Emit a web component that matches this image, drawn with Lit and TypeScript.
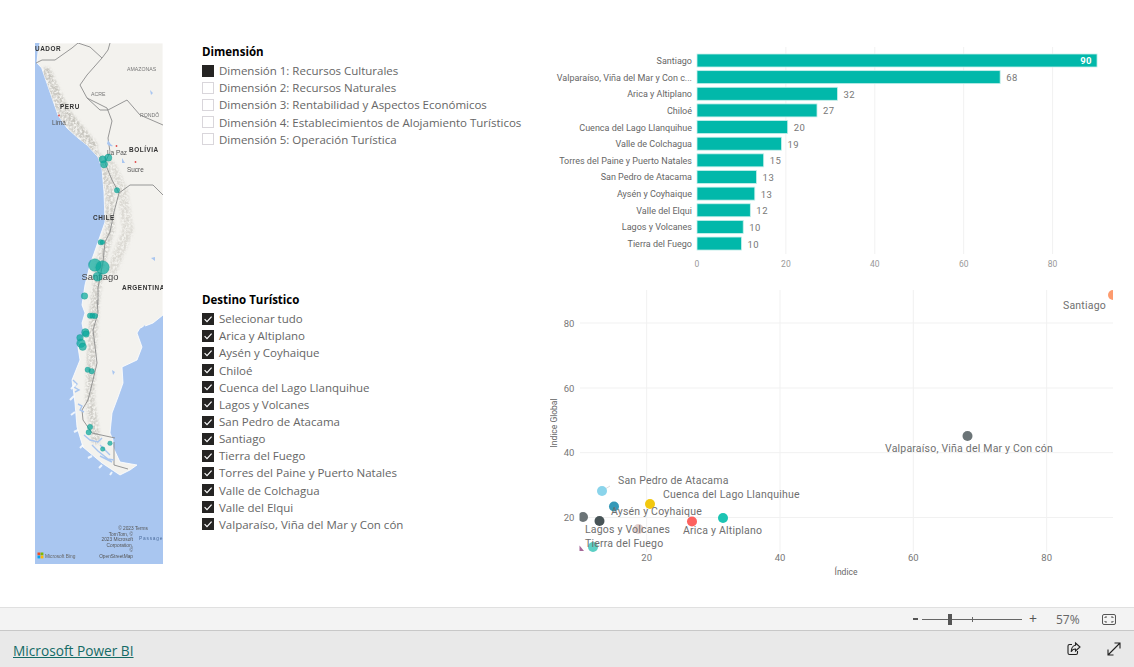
import { LitElement, html, svg, css } from 'lit';
import { customElement } from 'lit/decorators.js';

// label, shown value, value the bar is drawn from
const BARS: [string, number, number][] = [
  ['Santiago', 90, 90],
  ['Valparaíso, Viña del Mar y Con c...', 68, 68.2],
  ['Arica y Altiplano', 32, 31.6],
  ['Chiloé', 27, 27],
  ['Cuenca del Lago Llanquihue', 20, 20.4],
  ['Valle de Colchagua', 19, 19],
  ['Torres del Paine y Puerto Natales', 15, 15],
  ['San Pedro de Atacama', 13, 13.4],
  ['Aysén y Coyhaique', 13, 13],
  ['Valle del Elqui', 12, 12],
  ['Lagos y Volcanes', 10, 10.4],
  ['Tierra del Fuego', 10, 10],
];

const DIMENSIONS = [
  'Dimensión 1: Recursos Culturales',
  'Dimensión 2: Recursos Naturales',
  'Dimensión 3: Rentabilidad y Aspectos Económicos',
  'Dimensión 4: Establecimientos de Alojamiento Turísticos',
  'Dimensión 5: Operación Turística',
];

const DESTINOS = [
  'Selecionar tudo',
  'Arica y Altiplano',
  'Aysén y Coyhaique',
  'Chiloé',
  'Cuenca del Lago Llanquihue',
  'Lagos y Volcanes',
  'San Pedro de Atacama',
  'Santiago',
  'Tierra del Fuego',
  'Torres del Paine y Puerto Natales',
  'Valle de Colchagua',
  'Valle del Elqui',
  'Valparaíso, Viña del Mar y Con cón',
];

// x, y, color of each scatter point, in page pixels
const POINTS: [number, number, string][] = [
  [1113, 295, '#FD9B6E'],
  [967.5, 436, '#6B7477'],
  [602, 491, '#8AD4EB'],
  [614, 506.5, '#3599B8'],
  [650, 504, '#F2C80F'],
  [583, 517, '#6B7477'],
  [599.5, 521, '#475356'],
  [638.5, 529, '#E3CFCC'],
  [692, 521.5, '#FD625E'],
  [723, 518, '#1CC4B3'],
  [593, 547, '#5CCFC4'],
];

const SCATTER_LABELS: [string, number, number][] = [
  ['Santiago', 1063, 309],
  ['Valparaíso, Viña del Mar y Con cón', 885, 452],
  ['San Pedro de Atacama', 618, 484],
  ['Cuenca del Lago Llanquihue', 663, 498],
  ['Aysén y Coyhaique', 611, 515],
  ['Lagos y Volcanes', 585, 533],
  ['Arica y Altiplano', 683, 534],
  ['Tierra del Fuego', 585, 547],
];

const BUBBLES: [number, number, number][] = [
  [102.7, 159.3, 3.6], [108.3, 157.7, 3.6], [104, 164.3, 3.6], [117, 190.3, 2.7],
  [100.7, 242.3, 2.7], [102.5, 242.3, 2.3], [102.5, 267.5, 6.8], [94.8, 265, 6.3], [97.5, 276.7, 4.5],
  [84.5, 296, 3.3], [90, 315.7, 2.7], [92.5, 315.7, 2.7], [95, 316, 2.7],
  [85.3, 332.3, 3.7], [86, 334, 3.3], [80, 337.7, 3.3], [81, 343.3, 4.3], [82.7, 346.7, 3.7],
  [87.7, 369.7, 2.7], [91.7, 371.3, 2.7], [90, 427, 2.7], [88.7, 432.3, 2.7],
  [110, 443.3, 2.3], [102.7, 449, 2.3],
];

const MAP_LABELS: [string, number, number, string][] = [
  ['UADOR', 35, 50.5, 'ml-country'],
  ['AMAZONAS', 127, 71, 'ml-state'],
  ['ACRE', 91, 96, 'ml-state'],
  ['PERU', 60, 108.5, 'ml-country'],
  ['Lima', 52, 124.5, 'ml-city'],
  ['RONDÔ', 140, 117, 'ml-state'],
  ['La Paz', 107, 154.5, 'ml-city'],
  ['BOLÍVIA', 129, 152, 'ml-country'],
  ['Sucre', 127, 171.5, 'ml-city'],
  ['CHILE', 93, 220, 'ml-country'],
  ['Santiago', 100, 279.5, 'ml-big'],
  ['ARGENTINA', 122, 290, 'ml-country'],
];

const LAND =
  'M40 43 L38 52 L37 63 L41.7 68 L50 92 L58 115 L67 128 L78 138 L87 145 L98 157 L102 168 L104 192 L105 222 L98 242 L90 265 L85 285 L82 305 L85 313 L82 323 L84 334 L78 347 L80 360 L72 380 L75 403 L77 427 L83 447 L102 463 L120 475 L130 470 L137 465 L120 462 L113 447 L113 440 L110 433 L112 413 L118 397 L123 383 L122 367 L137 360 L142 347 L137 333 L140 328 L153 323 L163 315 L163 43 Z';

const BORDERS = [
  'M36 63 L42 60 L55 60 L72 48 L78 43',
  'M78 43 L90 47 L102 58 L108 50 L110 43',
  'M102 58 L87 75 L80 85 L87 98 L107 108 L112 121 L108 138 L110 152 L105 163 L112 180 L119 193 L130 185 L153 185 L163 195',
  'M87 98 L100 110 L108 110 L127 100 L140 115 L163 125',
  'M119 193 L114 212 L110 232 L105 242 L103 262 L98 288 L98 305',
  'M97 300 L98 313 L93 330 L97 363 L93 380 L88 400 L82 410 L83 420 L92 433 L115 438',
  'M114 442 L114 465 L128 469',
];

const FIORDS =
  'M73 380 l4 4 l-3 3 l5 3 l-4 2 M78 404 l4 2 l-2 4 l4 2 M84 435 l6 5 l8 2 l4 -4 M100 445 l10 10 M92 445 l6 6 l10 8 l6 1 M100 456 l12 6';

@customElement('app-root')
export class AppRoot extends LitElement {
  static override styles = css`
    :host {
      display: flex;
      flex-direction: column;
      width: 1134px;
      height: 667px;
      background: #fff;
      overflow: hidden;
      font-family: 'Open Sans', 'Noto Sans', sans-serif;
    }

    .canvas {
      display: flex;
      flex: 1;
      min-height: 0;
      padding: 43px 0 0 35px;
    }

    .map {
      flex: none;
      display: block;
      width: 128px;
      height: 521px;
    }

    .slicers {
      flex: none;
      width: 348px;
      margin-left: 39px;
    }

    .slicer {
      height: 248px;
    }

    .slicer-title {
      margin: 0 0 1px;
      font-size: 11.5px;
      line-height: 18px;
      font-weight: 700;
      color: #000;
    }

    .slicer-row {
      display: flex;
      align-items: center;
      gap: 5px;
      height: 17.17px;
      font-size: 11.5px;
      color: #666;
      white-space: nowrap;
    }

    .box {
      flex: none;
      box-sizing: border-box;
      display: flex;
      width: 12px;
      height: 12px;
      border: 1px solid #d9d6db;
    }

    .box.on {
      background: #252423;
      border-color: #252423;
    }

    .box svg {
      width: 10px;
      height: 10px;
    }

    .charts {
      flex: none;
      width: 584px;
    }

    .charts svg {
      display: block;
    }

    .status {
      flex: none;
      box-sizing: border-box;
      display: flex;
      align-items: center;
      height: 24px;
      background: #f3f3f3;
      border-top: 1px solid #e0e0e0;
      border-bottom: 1px solid #c8c8c8;
      color: #555;
    }

    .zoom-minus {
      margin-left: 913px;
      width: 5px;
      height: 2px;
      background: #555;
    }

    .track {
      position: relative;
      width: 100px;
      height: 1px;
      margin-left: 4px;
      background: #666;
    }

    .thumb {
      position: absolute;
      left: 26px;
      top: -5px;
      width: 3.5px;
      height: 11px;
      background: #555;
    }

    .tick {
      position: absolute;
      left: 50px;
      top: -2px;
      width: 1px;
      height: 5px;
      background: #666;
    }

    .zoom-plus {
      margin-left: 6px;
      font-size: 14px;
      line-height: 14px;
      width: 10px;
      text-align: center;
    }

    .zoom-value {
      margin-left: 18px;
      width: 28px;
      font-size: 12px;
      color: #666;
    }

    .fit {
      margin-left: 18px;
      display: block;
    }

    .footer {
      flex: none;
      display: flex;
      align-items: center;
      height: 36px;
      padding: 3px 12px 0 13px;
      box-sizing: border-box;
      background: #e9e9e9;
    }

    .brand {
      font-size: 13.7px;
      color: #146b66;
      text-decoration: underline;
    }

    .actions {
      display: flex;
      gap: 24px;
      margin-left: auto;
      margin-top: -3px;
    }

    .actions svg {
      display: block;
    }

    .grid-line {
      stroke: #f1f1f1;
      stroke-width: 1;
      fill: none;
    }

    .cat {
      font: 9px Roboto, sans-serif;
      fill: #666;
      text-anchor: end;
    }

    .val {
      font: 9.5px Roboto, sans-serif;
      letter-spacing: 0.5px;
      fill: #777;
    }

    .val-in {
      font: 700 9.5px Roboto, sans-serif;
      letter-spacing: 0.5px;
      fill: #fff;
      text-anchor: end;
    }

    .tick-label {
      font: 8.5px Roboto, sans-serif;
      fill: #999;
      text-anchor: middle;
    }

    .axis-y {
      font: 9.5px Roboto, sans-serif;
      fill: #777;
      text-anchor: middle;
    }

    .axis-title {
      font: 8.5px Roboto, sans-serif;
      fill: #666;
      text-anchor: middle;
    }

    .pt-label {
      font: 10.5px Roboto, sans-serif;
      letter-spacing: 0.2px;
      fill: #6f6f6f;
    }

    .ml-country {
      font: 700 6.4px 'Liberation Sans', sans-serif;
      letter-spacing: 0.55px;
      fill: #333;
    }

    .ml-state {
      font: 5.2px 'Liberation Sans', sans-serif;
      fill: #777;
    }

    .ml-city {
      font: 6.4px 'Liberation Sans', sans-serif;
      fill: #555;
    }

    .ml-big {
      font: 9.4px 'Liberation Sans', sans-serif;
      fill: #444;
      text-anchor: middle;
    }

    .attr {
      font: 4.8px 'Liberation Sans', sans-serif;
      fill: #555;
      text-anchor: end;
    }

    .passage {
      font: 4.8px 'Liberation Sans', sans-serif;
      letter-spacing: 0.8px;
      fill: #4f6f9f;
    }

    .bing {
      font: 4.8px 'Liberation Sans', sans-serif;
      fill: #666;
    }
  `;

  private _map() {
    return html`<svg class="map" viewBox="35 43 128 521" width="128" height="521">
      <defs>
        <filter id="soft"><feGaussianBlur stdDeviation="0.35"></feGaussianBlur></filter>
        <filter id="rough" x="-20%" y="-20%" width="140%" height="140%">
          <feGaussianBlur in="SourceGraphic" stdDeviation="1.4" result="b"></feGaussianBlur>
          <feTurbulence type="fractalNoise" baseFrequency="0.45" numOctaves="3" seed="4" result="n"></feTurbulence>
          <feColorMatrix in="n" type="matrix" values="0 0 0 0 0  0 0 0 0 0  0 0 0 0 0  0 0 0 3 -0.9" result="a"></feColorMatrix>
          <feComposite in="b" in2="a" operator="in"></feComposite>
          <feGaussianBlur stdDeviation="0.6"></feGaussianBlur>
        </filter>
        <clipPath id="land"><path d=${LAND}></path></clipPath>
      </defs>
      <rect x="35" y="43" width="128" height="521" fill="#a9c6f0"></rect>
      <path d=${LAND} fill="#f3f2ee" stroke="#fff" stroke-width="0.8"></path>
      <g clip-path="url(#land)">
        <g filter="url(#rough)" fill="none" stroke-linecap="round">
          <path d="M45 72 L62 115 L85 140 L103 165 L110 195 L110 230 L100 265 L95 300 L92 345 L90 400 L96 440" stroke="#cfcdc7" stroke-width="9"></path>
          <path d="M110 165 L122 190 L128 230 L112 270" stroke="#dbd9d3" stroke-width="11"></path>
          <path d="M48 70 L66 110 L95 145" stroke="#c4c2bb" stroke-width="5"></path>
        </g>
      </g>
      <g filter="url(#soft)">
        <g fill="none" stroke="#8c8c8c" stroke-width="0.9" stroke-linejoin="round">
          ${BORDERS.map(d => svg`<path d=${d}></path>`)}
        </g>
        <path d=${FIORDS} fill="none" stroke="#a9c6f0" stroke-width="1.4"></path>
        <path d="M76 384 l-5 5 M74 396 l-4 4 M75 412 l-4 3 M78 430 l-4 2 M83 445 l-3 3 M92 456 l-4 2 M102 465 l-3 3 M112 472 l-2 3" fill="none" stroke="#fff" stroke-width="2" opacity="0.8"></path>
        <path d="M108 140 q2 4 5 6 q-3 1 -6 -2z M122 158 l3 5 l-3 0z M150 90 l3 3 l-2 2z M151 258 l4 -1 l0 4z M142 328 l3 -3 l1 5z M112 370 l3 2 l-2 3z" fill="#a9c6f0"></path>
        <circle cx="116.5" cy="146" r="0.9" fill="#e04a4a"></circle>
        <circle cx="135.5" cy="162" r="0.9" fill="#e04a4a"></circle>
        <circle cx="59" cy="115.5" r="0.9" fill="#e04a4a"></circle>
        ${MAP_LABELS.map(([t, x, y, c]) => svg`<text class=${c} x=${x} y=${y}>${t}</text>`)}
        <text class="attr" x="148" y="530">© 2023 Terms</text>
        <text class="attr" x="133" y="535.5">TomTom, ©</text>
        <text class="attr" x="133" y="541">2023 Microsoft</text>
        <text class="attr" x="133" y="546.5">Corporation,</text>
        <text class="attr" x="133" y="552">©</text>
        <text class="attr" x="133" y="558">OpenStreetMap</text>
        <text class="passage" x="139" y="539.5">Passage</text>
        <rect x="37.5" y="552.5" width="2.8" height="2.8" fill="#f25022"></rect>
        <rect x="40.6" y="552.5" width="2.8" height="2.8" fill="#7fba00"></rect>
        <rect x="37.5" y="555.6" width="2.8" height="2.8" fill="#00a4ef"></rect>
        <rect x="40.6" y="555.6" width="2.8" height="2.8" fill="#ffb900"></rect>
        <text class="bing" x="45" y="557.5">Microsoft Bing</text>
      </g>
      ${BUBBLES.map(([x, y, r]) => svg`<circle cx=${x} cy=${y} r=${r} fill="#0aa99c" fill-opacity="0.72" stroke="#0b8f85" stroke-opacity="0.6" stroke-width="0.5"></circle>`)}
    </svg>`;
  }

  private _slicer(title: string, rows: string[], isOn: (i: number) => boolean) {
    return html`<section class="slicer">
      <h3 class="slicer-title">${title}</h3>
      ${rows.map((r, i) => html`<div class="slicer-row">
        <span class="box ${isOn(i) ? 'on' : ''}">${title === 'Destino Turístico'
          ? html`<svg viewBox="0 0 10 10"><path d="M1.6 5.2 L4 7.6 L8.6 2.6" fill="none" stroke="#fff" stroke-width="1.2"></path></svg>`
          : ''}</span>
        <span>${r}</span>
      </div>`)}
    </section>`;
  }

  private _barChart() {
    const x0 = 697;
    const unit = 4.445;
    return html`<svg viewBox="550 43 584 240" width="584" height="240">
      ${[20, 40, 60, 80].map(v => svg`<line class="grid-line" x1=${x0 + v * unit} x2=${x0 + v * unit} y1="47" y2="254"></line>`)}
      ${BARS.map(([name, shown, v], i) => {
        const y = 54 + i * 16.64;
        const w = v * unit;
        return svg`
          <rect x=${x0} y=${y} width=${w} height="13" fill="#01b8aa" stroke="#c8efeb" stroke-width="0.8"></rect>
          <text class="cat" x="692" y=${y + 10}>${name}</text>
          ${shown === 90
            ? svg`<text class="val-in" x=${x0 + w - 5} y=${y + 10}>${shown}</text>`
            : svg`<text class="val" x=${x0 + w + 6} y=${y + 10.5}>${shown}</text>`}
        `;
      })}
      ${[0, 20, 40, 60, 80].map(v => svg`<text class="tick-label" x=${x0 + v * unit} y="267">${v}</text>`)}
    </svg>`;
  }

  private _scatter() {
    const xs = [646.7, 780, 913.3, 1046.7];
    const ys = [323, 388, 452.7, 517.5];
    return html`<svg viewBox="550 283 584 300" width="584" height="300">
      <defs>
        <clipPath id="plot"><rect x="579.5" y="290" width="533.5" height="262"></rect></clipPath>
      </defs>
      ${xs.map(x => svg`<line class="grid-line" x1=${x} x2=${x} y1="290" y2="552"></line>`)}
      ${ys.map(y => svg`<line class="grid-line" x1="580" x2="1113" y1=${y} y2=${y}></line>`)}
      <line x1="606" y1="488.5" x2="610" y2="486" stroke="#ccc" stroke-width="0.7"></line>
      <g clip-path="url(#plot)">
        ${POINTS.map(([x, y, c]) => svg`<circle cx=${x} cy=${y} r="5" fill=${c}></circle>`)}
      </g>
      <path d="M579.5 545.5 L584 551 H579.5 Z" fill="#a66999"></path>
      ${SCATTER_LABELS.map(([t, x, y]) => svg`<text class="pt-label" x=${x} y=${y}>${t}</text>`)}
      ${ys.map((y, i) => svg`<text class="axis-y" x="569" y=${y + 3.5}>${80 - i * 20}</text>`)}
      ${xs.map((x, i) => svg`<text class="axis-y" x=${x} y="561">${20 + i * 20}</text>`)}
      <text class="axis-title" x="846" y="575">Índice</text>
      <text class="axis-title" transform="translate(557 423) rotate(-90)">Índice Global</text>
    </svg>`;
  }

  override render() {
    return html`
      <main class="canvas">
        ${this._map()}
        <div class="slicers">
          ${this._slicer('Dimensión', DIMENSIONS, i => i === 0)}
          ${this._slicer('Destino Turístico', DESTINOS, () => true)}
        </div>
        <div class="charts">
          ${this._barChart()}
          ${this._scatter()}
        </div>
      </main>
      <div class="status">
        <span class="zoom-minus"></span>
        <div class="track"><span class="tick"></span><span class="thumb"></span></div>
        <span class="zoom-plus">+</span>
        <span class="zoom-value">57%</span>
        <svg class="fit" width="14" height="11" viewBox="0 0 14 11" fill="none" stroke="#555">
          <rect x="0.5" y="0.5" width="13" height="10" rx="1.5"></rect>
          <path d="M3 4 V3 H5 M9 3 H11 V4 M11 7 V8 H9 M5 8 H3 V7"></path>
        </svg>
      </div>
      <footer class="footer">
        <a class="brand">Microsoft Power BI</a>
        <div class="actions">
          <svg width="16" height="16" viewBox="0 0 16 16" fill="none" stroke="#222" stroke-width="1.1">
            <path d="M6 3.5 H3.5 a1.5 1.5 0 0 0 -1.5 1.5 V12 a1.5 1.5 0 0 0 1.5 1.5 H10 a1.5 1.5 0 0 0 1.5 -1.5 V10"></path>
            <path d="M9.5 2 L14 6 L9.5 10 V8 C7.5 8 6 9 5.2 10.8 C5.2 7.5 7 4.6 9.5 4.2 Z"></path>
          </svg>
          <svg width="16" height="16" viewBox="0 0 16 16" fill="none" stroke="#222" stroke-width="1.1">
            <path d="M2 14 L14 2 M8.5 2 H14 V7.5 M2 8.5 V14 H7.5"></path>
          </svg>
        </div>
      </footer>
    `;
  }
}
